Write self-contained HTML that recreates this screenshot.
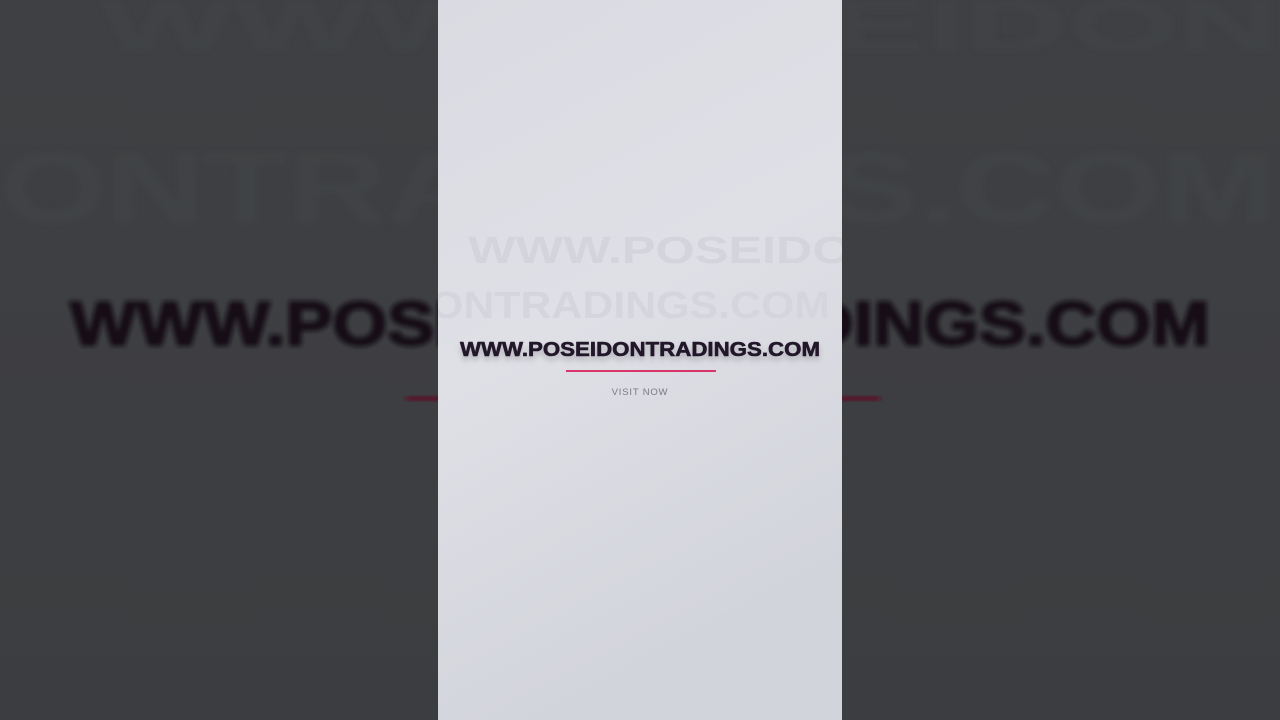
<!DOCTYPE html>
<html><head><style>
html,body{margin:0;padding:0;width:1280px;height:720px;overflow:hidden;background:#3e3f42;}
svg{display:block}
</style></head><body>
<svg width="1280" height="720" viewBox="0 0 1280 720" xmlns="http://www.w3.org/2000/svg">
<defs>
<linearGradient id="bg" x1="0" y1="0" x2="0" y2="1">
<stop offset="0" stop-color="#3f4043"/><stop offset="1" stop-color="#3c3d40"/>
</linearGradient>
<linearGradient id="pn" x1="0" y1="0" x2="0.3" y2="1">
<stop offset="0" stop-color="#dadbe2"/><stop offset="0.5" stop-color="#dfe0e6"/><stop offset="1" stop-color="#d2d4db"/>
</linearGradient>
<filter id="bl"><feGaussianBlur stdDeviation="2"/></filter>
<filter id="bl2"><feGaussianBlur stdDeviation="3"/></filter>
<filter id="sh" x="-10%" y="-50%" width="120%" height="200%"><feDropShadow dx="0" dy="4" stdDeviation="3" flood-color="#000" flood-opacity="0.2"/></filter>
<clipPath id="pc"><rect x="438" y="0" width="404" height="720"/></clipPath>
</defs>
<rect width="1280" height="720" fill="url(#bg)"/>
<g font-family="Liberation Sans, sans-serif" font-weight="bold">
<g filter="url(#bl2)" fill="#414245">
<text x="100" y="50" font-size="72" textLength="1180" lengthAdjust="spacingAndGlyphs">WWW.POSEIDON</text>
<text x="0" y="222" font-size="100" textLength="1275" lengthAdjust="spacingAndGlyphs">ONTRADINGS.COM</text>
</g>
<text x="70" y="345" font-size="62" fill="#141117" stroke="#141117" stroke-width="2" filter="url(#bl)" textLength="1140" lengthAdjust="spacingAndGlyphs">WWW.POSEIDONTRADINGS.COM</text>
</g>
<rect x="406" y="396" width="474" height="5" fill="#5a0a25" filter="url(#bl)"/>
<rect x="438" y="0" width="404" height="720" fill="url(#pn)"/>
<g clip-path="url(#pc)" font-family="Liberation Sans, sans-serif" font-weight="bold">
<text x="468" y="263" font-size="38" fill="#d4d5dc" textLength="420" lengthAdjust="spacingAndGlyphs">WWW.POSEIDON</text>
<text x="430" y="318" font-size="38" fill="#d5d6dd" textLength="400" lengthAdjust="spacingAndGlyphs">ONTRADINGS.COM</text>
<text x="460" y="356" font-size="20" fill="#24162a" stroke="#24162a" stroke-width="0.6" filter="url(#sh)" textLength="360" lengthAdjust="spacingAndGlyphs">WWW.POSEIDONTRADINGS.COM</text>
</g>
<rect x="566" y="370" width="150" height="2" fill="#d9356b"/>
<text x="640" y="395" font-family="Liberation Sans, sans-serif" font-size="9.5" fill="#7a7a80" text-anchor="middle" letter-spacing="0.8">VISIT NOW</text>
</svg>
</body></html>
